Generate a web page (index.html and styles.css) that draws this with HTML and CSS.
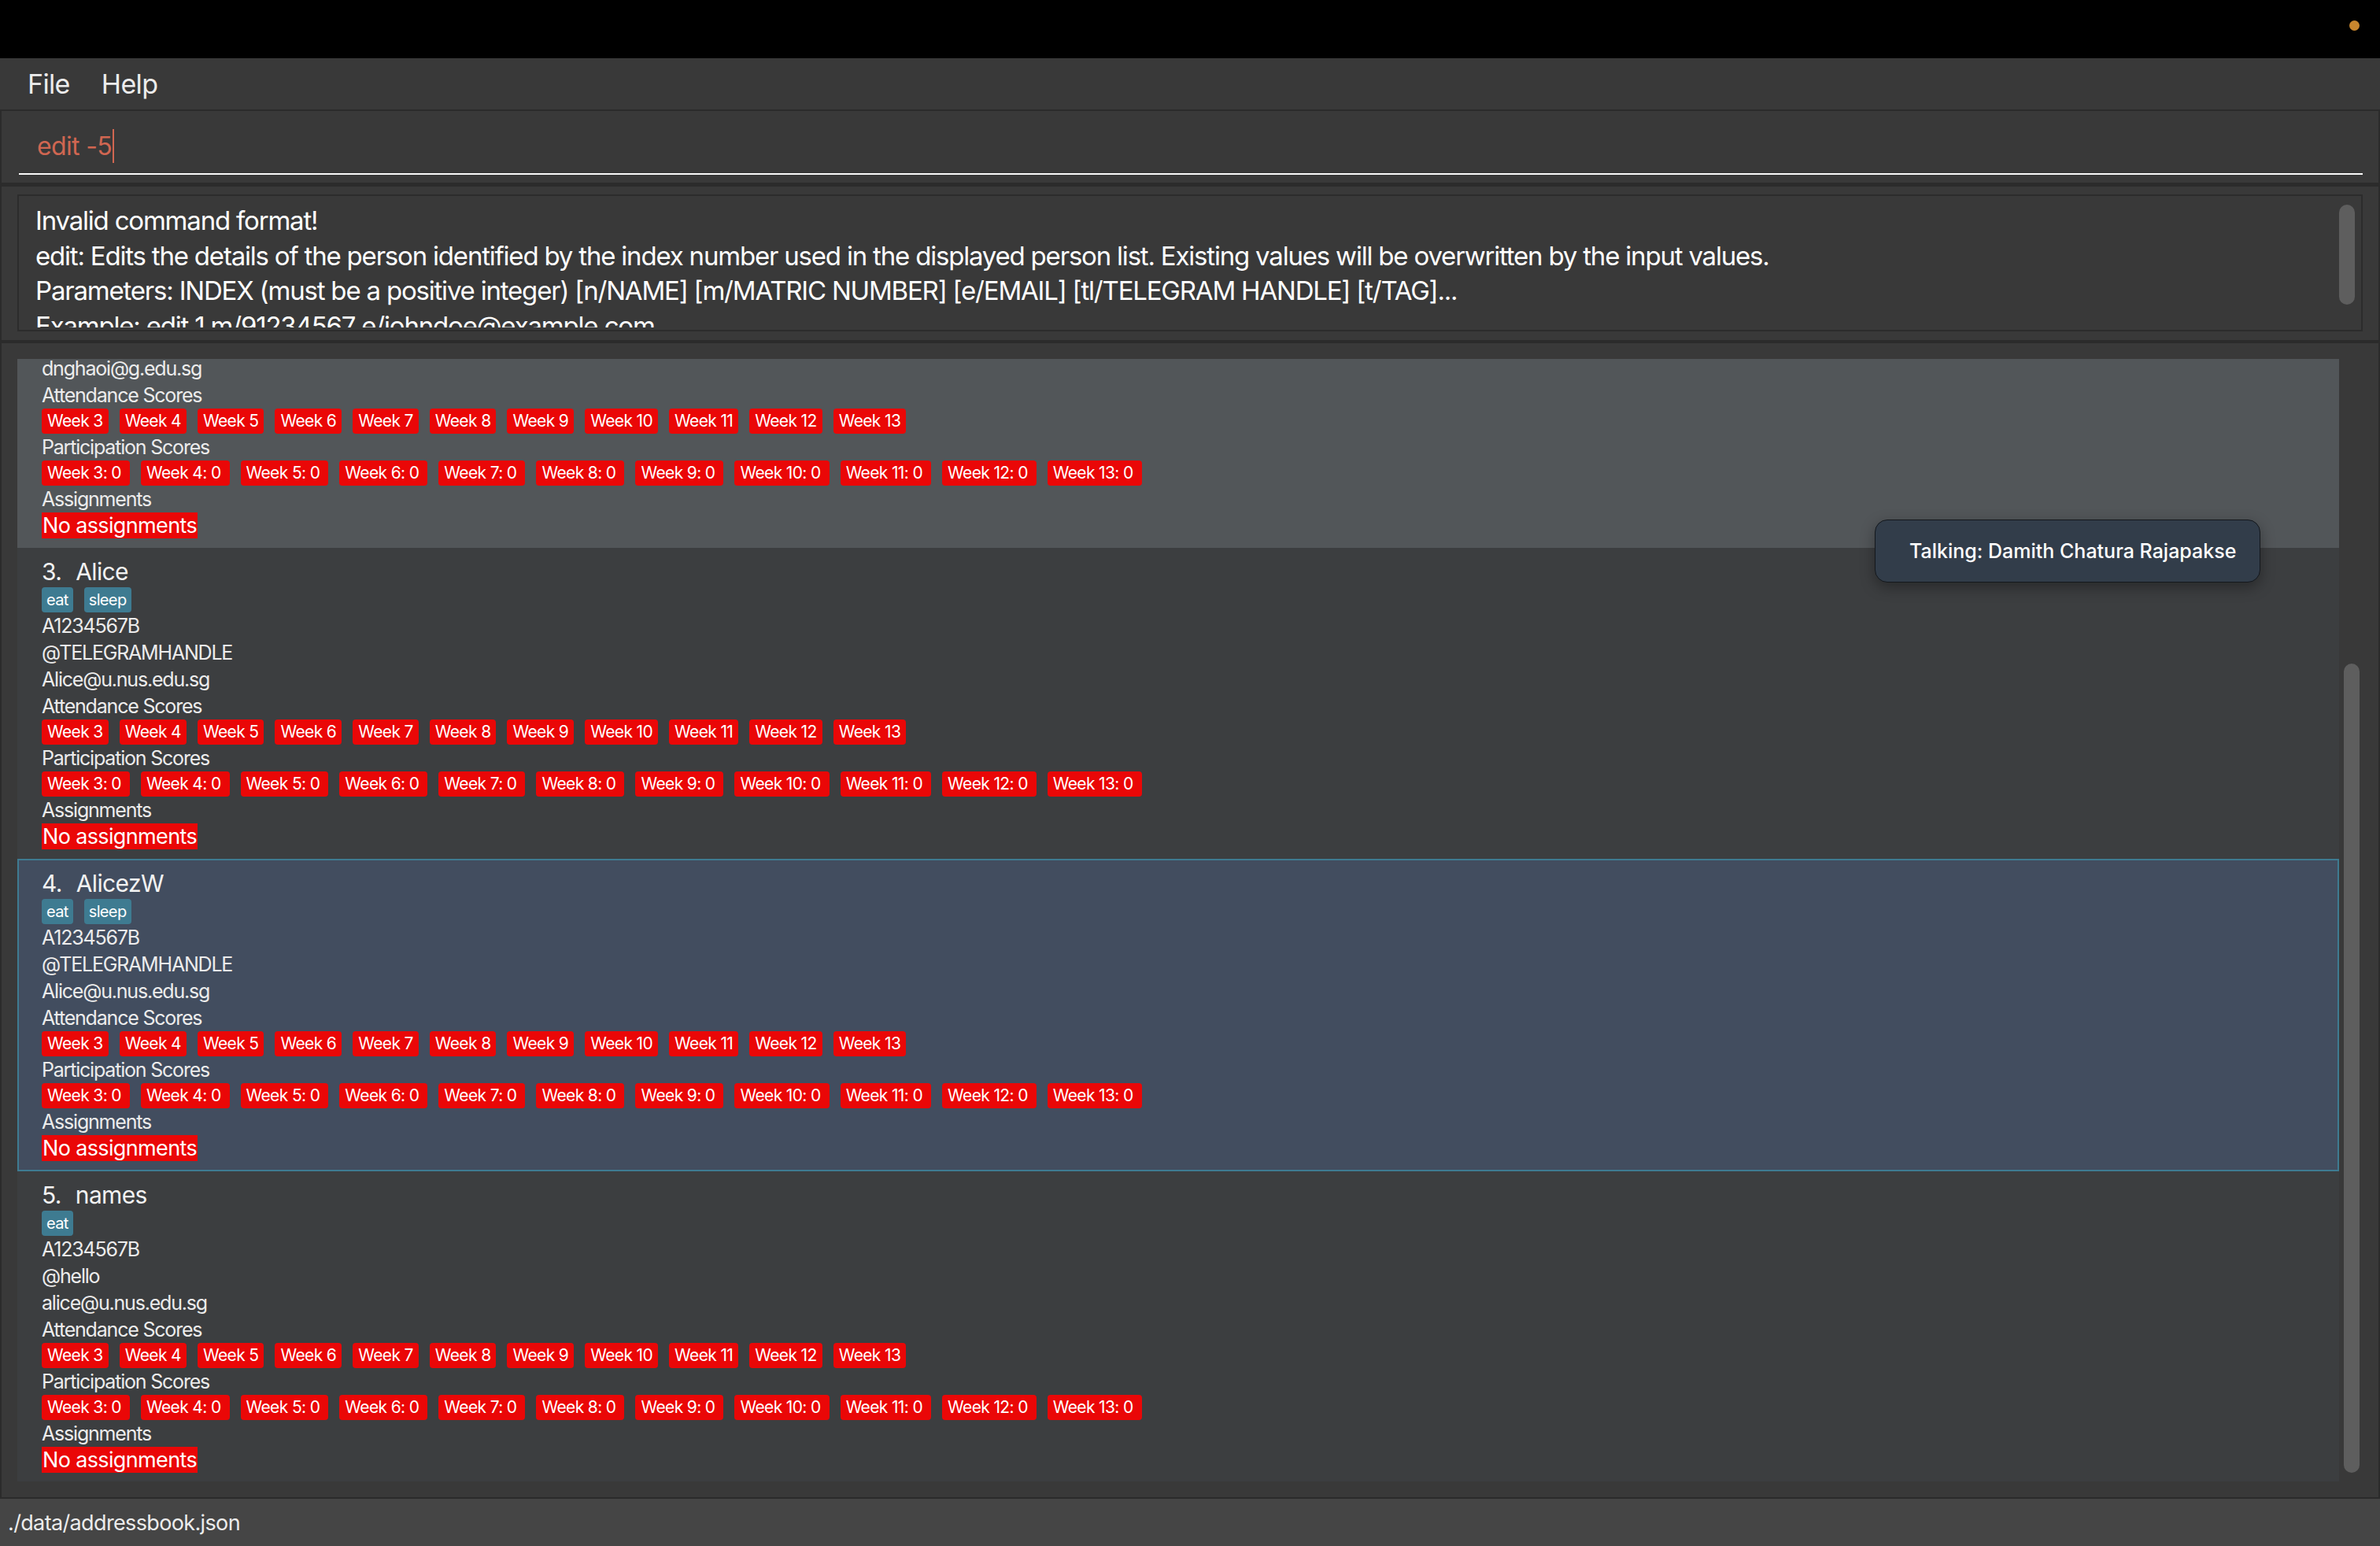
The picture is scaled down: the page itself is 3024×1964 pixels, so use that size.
FILE: index.html
```html
<!DOCTYPE html>
<html lang="en">
<head>
<meta charset="utf-8">
<title>Address App</title>
<link rel="stylesheet" href="styles.css">
</head>
<body>
<div class="window">
  <div class="titlebar"><span class="dot"></span></div>
  <div class="menubar"><span class="menu">File</span><span class="menu">Help</span></div>
  <div class="pane command-pane">
    <div class="command-field"><span class="command-text">edit -5</span><span class="caret"></span></div>
  </div>
  <div class="pane result-pane">
    <div class="result-box">
      <div class="result-clip">
        <div class="result-line">Invalid command format!</div>
        <div class="result-line">edit: Edits the details of the person identified by the index number used in the displayed person list. Existing values will be overwritten by the input values.</div>
        <div class="result-line">Parameters: INDEX (must be a positive integer) [n/NAME] [m/MATRIC NUMBER] [e/EMAIL] [tl/TELEGRAM HANDLE] [t/TAG]...</div>
        <div class="result-line">Example: edit 1 m/91234567 e/johndoe@example.com</div>
      </div>
      <div class="thumb result-thumb"></div>
    </div>
  </div>
  <div class="pane list-pane">
    <div class="list-view">
      <div class="list-inner">
        <div class="card odd partial">
          <div class="line">dnghaoi@g.edu.sg</div>
          <div class="line">Attendance Scores</div>
          <div class="weeks"><span class="wk">Week 3</span><span class="wk">Week 4</span><span class="wk">Week 5</span><span class="wk">Week 6</span><span class="wk">Week 7</span><span class="wk">Week 8</span><span class="wk">Week 9</span><span class="wk">Week 10</span><span class="wk">Week 11</span><span class="wk">Week 12</span><span class="wk">Week 13</span></div>
          <div class="line">Participation Scores</div>
          <div class="weeks"><span class="wk pt">Week 3: 0</span><span class="wk pt">Week 4: 0</span><span class="wk pt">Week 5: 0</span><span class="wk pt">Week 6: 0</span><span class="wk pt">Week 7: 0</span><span class="wk pt">Week 8: 0</span><span class="wk pt">Week 9: 0</span><span class="wk pt">Week 10: 0</span><span class="wk pt">Week 11: 0</span><span class="wk pt">Week 12: 0</span><span class="wk pt">Week 13: 0</span></div>
          <div class="line">Assignments</div>
          <div class="none">No assignments</div>
        </div>
        <div class="card even">
          <div class="name"><span class="idx">3.</span><span>Alice</span></div>
          <div class="tags"><span class="tag">eat</span><span class="tag">sleep</span></div>
          <div class="line">A1234567B</div>
          <div class="line">@TELEGRAMHANDLE</div>
          <div class="line">Alice@u.nus.edu.sg</div>
          <div class="line">Attendance Scores</div>
          <div class="weeks"><span class="wk">Week 3</span><span class="wk">Week 4</span><span class="wk">Week 5</span><span class="wk">Week 6</span><span class="wk">Week 7</span><span class="wk">Week 8</span><span class="wk">Week 9</span><span class="wk">Week 10</span><span class="wk">Week 11</span><span class="wk">Week 12</span><span class="wk">Week 13</span></div>
          <div class="line">Participation Scores</div>
          <div class="weeks"><span class="wk pt">Week 3: 0</span><span class="wk pt">Week 4: 0</span><span class="wk pt">Week 5: 0</span><span class="wk pt">Week 6: 0</span><span class="wk pt">Week 7: 0</span><span class="wk pt">Week 8: 0</span><span class="wk pt">Week 9: 0</span><span class="wk pt">Week 10: 0</span><span class="wk pt">Week 11: 0</span><span class="wk pt">Week 12: 0</span><span class="wk pt">Week 13: 0</span></div>
          <div class="line">Assignments</div>
          <div class="none">No assignments</div>
        </div>
        <div class="card selected">
          <div class="name"><span class="idx">4.</span><span>AlicezW</span></div>
          <div class="tags"><span class="tag">eat</span><span class="tag">sleep</span></div>
          <div class="line">A1234567B</div>
          <div class="line">@TELEGRAMHANDLE</div>
          <div class="line">Alice@u.nus.edu.sg</div>
          <div class="line">Attendance Scores</div>
          <div class="weeks"><span class="wk">Week 3</span><span class="wk">Week 4</span><span class="wk">Week 5</span><span class="wk">Week 6</span><span class="wk">Week 7</span><span class="wk">Week 8</span><span class="wk">Week 9</span><span class="wk">Week 10</span><span class="wk">Week 11</span><span class="wk">Week 12</span><span class="wk">Week 13</span></div>
          <div class="line">Participation Scores</div>
          <div class="weeks"><span class="wk pt">Week 3: 0</span><span class="wk pt">Week 4: 0</span><span class="wk pt">Week 5: 0</span><span class="wk pt">Week 6: 0</span><span class="wk pt">Week 7: 0</span><span class="wk pt">Week 8: 0</span><span class="wk pt">Week 9: 0</span><span class="wk pt">Week 10: 0</span><span class="wk pt">Week 11: 0</span><span class="wk pt">Week 12: 0</span><span class="wk pt">Week 13: 0</span></div>
          <div class="line">Assignments</div>
          <div class="none">No assignments</div>
        </div>
        <div class="card even">
          <div class="name"><span class="idx">5.</span><span>names</span></div>
          <div class="tags"><span class="tag">eat</span></div>
          <div class="line">A1234567B</div>
          <div class="line">@hello</div>
          <div class="line">alice@u.nus.edu.sg</div>
          <div class="line">Attendance Scores</div>
          <div class="weeks"><span class="wk">Week 3</span><span class="wk">Week 4</span><span class="wk">Week 5</span><span class="wk">Week 6</span><span class="wk">Week 7</span><span class="wk">Week 8</span><span class="wk">Week 9</span><span class="wk">Week 10</span><span class="wk">Week 11</span><span class="wk">Week 12</span><span class="wk">Week 13</span></div>
          <div class="line">Participation Scores</div>
          <div class="weeks"><span class="wk pt">Week 3: 0</span><span class="wk pt">Week 4: 0</span><span class="wk pt">Week 5: 0</span><span class="wk pt">Week 6: 0</span><span class="wk pt">Week 7: 0</span><span class="wk pt">Week 8: 0</span><span class="wk pt">Week 9: 0</span><span class="wk pt">Week 10: 0</span><span class="wk pt">Week 11: 0</span><span class="wk pt">Week 12: 0</span><span class="wk pt">Week 13: 0</span></div>
          <div class="line">Assignments</div>
          <div class="none">No assignments</div>
        </div>
      </div>
    </div>
    <div class="thumb list-thumb"></div>
  </div>
  <div class="statusbar">./data/addressbook.json</div>
  <div class="tooltip">Talking: Damith Chatura Rajapakse</div>
</div>
</body>
</html>
```

FILE: styles.css
```css
* { box-sizing: border-box; margin: 0; padding: 0; }
html, body { width: 3024px; height: 1964px; overflow: hidden; background: #2b2b2b; }
body { font-family: Inter, "Open Sans", sans-serif; color: #f0f0f0; letter-spacing: -0.64px; }

.window { position: relative; display: flex; flex-direction: column; height: 1964px; }

.titlebar { height: 74px; background: #000; display: flex; justify-content: flex-end; align-items: flex-start; padding: 26px 26px 0 0; }
.dot { width: 13px; height: 13px; border-radius: 50%; background: #c8862e; }

.menubar { height: 65px; background: #393939; display: flex; align-items: center; gap: 40px; padding-left: 35px; }
.menu { font-size: 34px; color: #ececec; line-height: 1; }

.pane { background: #393939; margin: 0 2px; }

.command-pane { height: 91px; margin-top: 2px; padding: 10px 20px 0 22px; }
.command-field { height: 71px; border-bottom: 2px solid #fafafa; display: flex; align-items: center; padding-left: 23px; }
.command-text { font-size: 32px; line-height: 1; color: #d06651; }
.caret { width: 2px; height: 43px; background: #d06651; margin-left: 1px; }

.result-pane { height: 195px; margin-top: 5px; padding: 10px 20px 11px 20px; }
.result-box { position: relative; height: 174px; border: 2px solid #2c2c2c; }
.result-clip { height: 167px; overflow: hidden; padding: 9px 0 0 21px; }
.result-line { font-size: 33px; line-height: 44.5px; letter-spacing: -1.2px; color: #fff; white-space: pre; }

.thumb { position: absolute; width: 20px; border-radius: 10px; background: #5e5e5e; }
.result-thumb { top: 11px; right: 8px; height: 127px; }

.list-pane { position: relative; height: 1466px; margin-top: 4px; padding: 20px 0 0 20px; }
.list-view { width: 2950px; height: 1426px; overflow: hidden; }
.list-inner { margin-top: -5px; }
.list-thumb { top: 407px; right: 24px; height: 1028px; }

.card { display: flex; flex-direction: column; align-items: flex-start; padding: 10px 0 12px 31px; }
.card.partial { padding-top: 0; }
.card.odd { background: #525659; }
.card.even { background: #3c3e40; }
.card.selected { background: #424d5f; border: 2px solid #3e7b91; padding: 9px 0 11px 29px; }

.name { display: flex; gap: 18px; height: 40px; line-height: 40px; font-size: 30px; color: #f2f2f2; }
.tags, .weeks { display: flex; gap: 14px; height: 32px; }
.tag, .wk { height: 32px; line-height: 32px; padding: 0 7px; border-radius: 4px; font-size: 21px; color: #fff; }
.tag { background: #3e7b91; font-size: 20px; padding: 0 6px; }
.wk { background: #ea0707; }
.wk.pt { padding-right: 11px; }
.line { height: 34px; line-height: 34px; font-size: 25px; letter-spacing: -1.2px; color: #ececec; white-space: nowrap; }
.none { height: 33px; line-height: 33px; font-size: 27px; background: #ea0707; color: #fff; padding: 0 1px; }

.statusbar { height: 60px; margin-top: 2px; background: #454545; display: flex; align-items: center; padding-left: 10px; font-size: 27px; color: #ececec; }

.tooltip { position: absolute; left: 2382px; top: 660px; width: 490px; height: 80px; display: flex; align-items: center; padding-left: 43px; background: #323d4a; border: 1px solid #14181d; border-radius: 16px; box-shadow: 0 6px 18px rgba(0,0,0,0.35); font-size: 25px; font-weight: 500; letter-spacing: 0; color: #fff; }
```
